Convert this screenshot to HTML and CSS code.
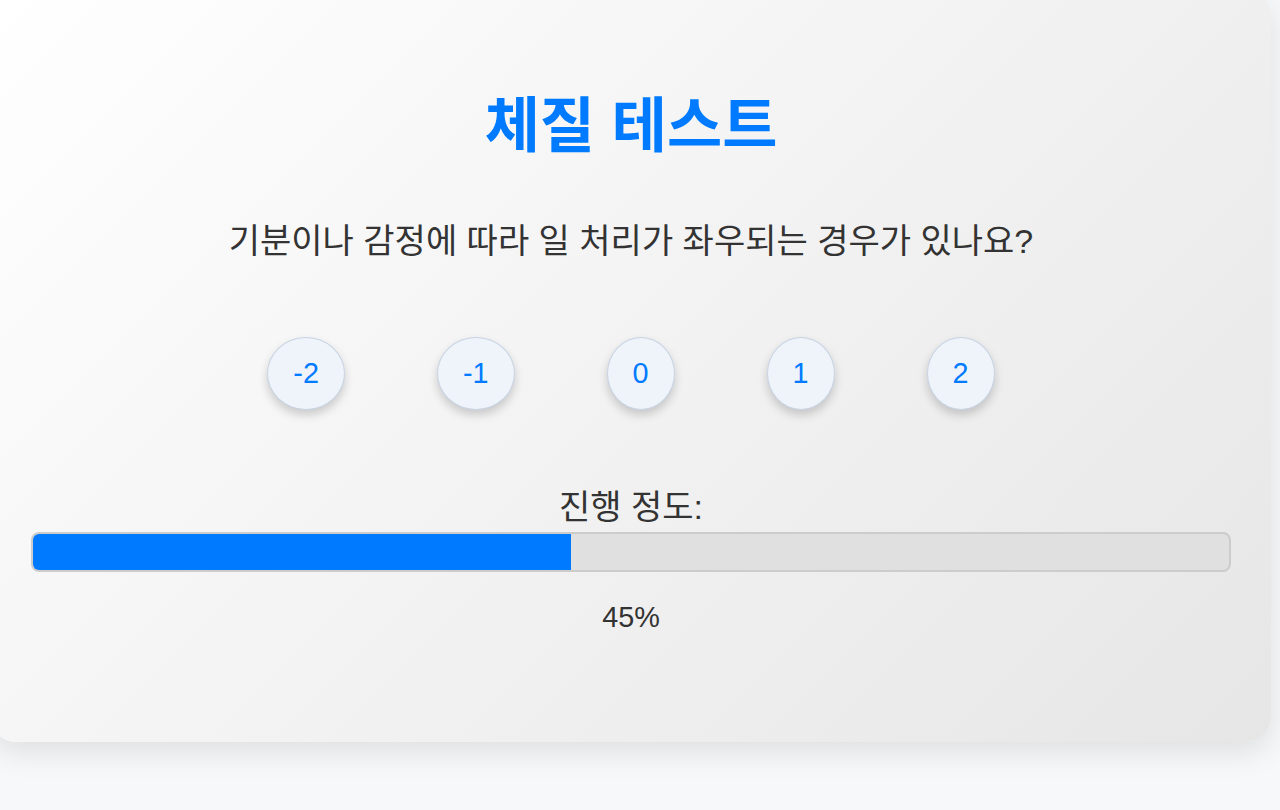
FILE: index.html
```html
<!DOCTYPE html>
<html lang="ko">
<head>
    <meta charset="UTF-8">
    <meta name="viewport" content="width=device-width, initial-scale=1.0">
    <title>체질 테스트</title>
    <link rel="stylesheet" href="styles.css">
</head>
<body>
    <div class="container">
        <h1 class="title">체질 테스트</h1>
        <p class="question">기분이나 감정에 따라 일 처리가 좌우되는 경우가 있나요?</p>
        <div class="options">
            <button class="option">-2</button>
            <button class="option">-1</button>
            <button class="option">0</button>
            <button class="option">1</button>
            <button class="option">2</button>
        </div>
        <div class="progress-label">진행 정도:</div>
        <div class="progress-bar">
            <div class="progress-fill" style="width: 45%;"></div>
        </div>
        <div class="progress-text">45%</div>
    </div>
</body>
</html>
```

FILE: styles.css
```css
body {
    margin: 0;
    padding: 0;
    background-color: #f7f8fa;
    font-family: "Liberation Sans", Arial, "Noto Sans CJK KR", sans-serif;
    min-height: 100vh;
    overflow: hidden;
}

.container {
    box-sizing: border-box;
    width: 1280px;
    height: 752px;
    margin: -10px 0 0 -9px;
    padding: 40px;
    border-radius: 25px;
    background: linear-gradient(135deg, #ffffff 0%, #e6e6e6 100%);
    box-shadow: 0 10px 30px rgba(0, 0, 0, 0.1);
    text-align: center;
}

.title {
    margin: 57px 0 0;
    font-size: 60px;
    line-height: 80px;
    font-weight: bold;
    color: #007bff;
}

.question {
    margin: 52px 0 0;
    font-size: 34px;
    line-height: 44px;
    color: #333;
}

.options {
    display: flex;
    justify-content: center;
    gap: 92px;
    margin-top: 74px;
}

.option {
    padding: 19px 25px;
    font-family: "Liberation Sans", Arial, sans-serif;
    font-size: 28.8px;
    line-height: 33px;
    color: #007bff;
    background-color: #eff3fa;
    border: 1px solid #c8d4e3;
    border-radius: 50%;
    box-shadow: 0 5px 10px rgba(0, 0, 0, 0.18);
    cursor: pointer;
}

.progress-label {
    margin-top: 77px;
    font-size: 34px;
    line-height: 40px;
    color: #333;
}

.progress-bar {
    height: 36px;
    margin-top: 5px;
    background-color: #e0e0e0;
    border: 2px solid #cccccc;
    border-radius: 8px;
    overflow: hidden;
}

.progress-fill {
    height: 100%;
    background-color: #007bff;
}

.progress-text {
    margin-top: 25px;
    font-size: 28.8px;
    line-height: 40px;
    color: #333;
}
```
